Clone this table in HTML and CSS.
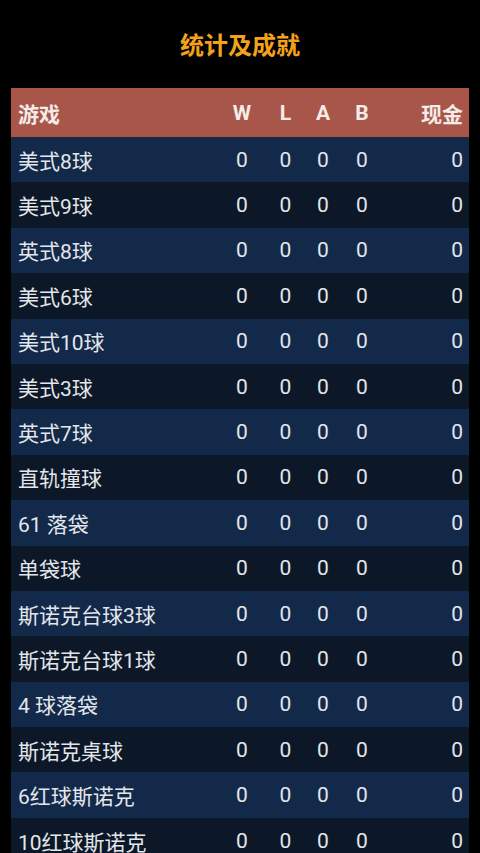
FILE: index.html
```html
<!DOCTYPE html>
<html lang="zh-CN">
<head>
<meta charset="utf-8">
<title>统计及成就</title>
<link rel="stylesheet" href="styles.css">
</head>
<body>
<div class="page">
  <h1 class="title">统计及成就</h1>
  <div class="table">
    <div class="row head">
      <div class="name">游戏</div><div class="c">W</div><div class="c">L</div><div class="c">A</div><div class="c">B</div><div class="cash">现金</div>
    </div>
    <div class="row odd"><div class="name">美式8球</div><div class="c">0</div><div class="c">0</div><div class="c">0</div><div class="c">0</div><div class="cash">0</div></div>
    <div class="row even"><div class="name">美式9球</div><div class="c">0</div><div class="c">0</div><div class="c">0</div><div class="c">0</div><div class="cash">0</div></div>
    <div class="row odd"><div class="name">英式8球</div><div class="c">0</div><div class="c">0</div><div class="c">0</div><div class="c">0</div><div class="cash">0</div></div>
    <div class="row even"><div class="name">美式6球</div><div class="c">0</div><div class="c">0</div><div class="c">0</div><div class="c">0</div><div class="cash">0</div></div>
    <div class="row odd"><div class="name">美式10球</div><div class="c">0</div><div class="c">0</div><div class="c">0</div><div class="c">0</div><div class="cash">0</div></div>
    <div class="row even"><div class="name">美式3球</div><div class="c">0</div><div class="c">0</div><div class="c">0</div><div class="c">0</div><div class="cash">0</div></div>
    <div class="row odd"><div class="name">英式7球</div><div class="c">0</div><div class="c">0</div><div class="c">0</div><div class="c">0</div><div class="cash">0</div></div>
    <div class="row even"><div class="name">直轨撞球</div><div class="c">0</div><div class="c">0</div><div class="c">0</div><div class="c">0</div><div class="cash">0</div></div>
    <div class="row odd"><div class="name">61 落袋</div><div class="c">0</div><div class="c">0</div><div class="c">0</div><div class="c">0</div><div class="cash">0</div></div>
    <div class="row even"><div class="name">单袋球</div><div class="c">0</div><div class="c">0</div><div class="c">0</div><div class="c">0</div><div class="cash">0</div></div>
    <div class="row odd"><div class="name">斯诺克台球3球</div><div class="c">0</div><div class="c">0</div><div class="c">0</div><div class="c">0</div><div class="cash">0</div></div>
    <div class="row even"><div class="name">斯诺克台球1球</div><div class="c">0</div><div class="c">0</div><div class="c">0</div><div class="c">0</div><div class="cash">0</div></div>
    <div class="row odd"><div class="name">4 球落袋</div><div class="c">0</div><div class="c">0</div><div class="c">0</div><div class="c">0</div><div class="cash">0</div></div>
    <div class="row even"><div class="name">斯诺克桌球</div><div class="c">0</div><div class="c">0</div><div class="c">0</div><div class="c">0</div><div class="cash">0</div></div>
    <div class="row odd"><div class="name">6红球斯诺克</div><div class="c">0</div><div class="c">0</div><div class="c">0</div><div class="c">0</div><div class="cash">0</div></div>
    <div class="row even"><div class="name">10红球斯诺克</div><div class="c">0</div><div class="c">0</div><div class="c">0</div><div class="c">0</div><div class="cash">0</div></div>
  </div>
</div>
</body>
</html>
```
FILE: styles.css
```css
html, body {
  margin: 0;
  padding: 0;
  background: #000;
}
body {
  font-family: Roboto, "Noto Sans CJK SC", sans-serif;
  color: #e3e6ea;
}
.page {
  padding: 0 11px;
  height: 853px;
  overflow: hidden;
}
.title {
  margin: 0;
  height: 88px;
  display: flex;
  align-items: center;
  justify-content: center;
  font-size: 24px;
  font-weight: 700;
  color: #f3a21c;
  padding-bottom: 2px;
  box-sizing: border-box;
}
.table {
  display: flex;
  flex-direction: column;
}
.row {
  display: grid;
  grid-template-columns: 1fr 48px 39px 36px 42px 80px;
  align-items: center;
  height: 45.4px;
  padding: 0 6px 0 7px;
  font-size: 21px;
}
.row.head {
  height: 49px;
  background: #a8564a;
  font-weight: 700;
  color: #f4ece9;
}
.odd { background: #13294a; }
.even { background: #0c1828; }
.c { text-align: center; }
.cash { text-align: right; }
.name { white-space: nowrap; }
```
